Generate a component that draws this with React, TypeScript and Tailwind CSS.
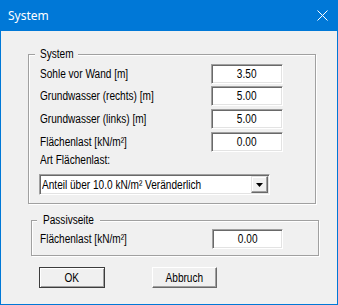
import React from "react";

const dlgFont = { fontFamily: '"Liberation Sans", Arial, sans-serif' };

function T({ children, origin = "origin-left" }: { children: React.ReactNode; origin?: string }) {
  return <span className={`inline-block whitespace-nowrap scale-x-[0.84] ${origin}`}>{children}</span>;
}

function Field({ value, w = "w-[72px]" }: { value: string; w?: string }) {
  return (
    <div
      className={`${w} h-[20px] bg-white border border-[#a0a0a0] border-b-white border-r-white shadow-[inset_1px_1px_0_#696969,inset_-1px_-1px_0_#e3e3e3] flex items-center justify-center text-[12px] leading-[14px] text-black`}
    >
      <T origin="origin-center">{value}</T>
    </div>
  );
}

function Row({ label, value, className = "" }: { label: string; value: string; className?: string }) {
  return (
    <div className={`flex items-center justify-between ${className}`}>
      <span className="text-[12px] leading-[14px] text-black"><T>{label}</T></span>
      <Field value={value} />
    </div>
  );
}

export default function App() {
  return (
    <div className="w-[338px] h-[305px] bg-[#f0f0f0] border-x border-b border-[#0078d7] flex flex-col select-none" style={dlgFont}>
      <div className="h-[31px] bg-[#0078d7] flex items-center justify-between pl-[8px] pr-[10px] -mx-px">
        <span className="text-white text-[12px]" style={{ fontFamily: '"Noto Sans", "Open Sans", sans-serif' }}>System</span>
        <svg width="11" height="11" viewBox="0 0 11 11" className="mt-[-1px]">
          <path d="M0.5 0.5 L10.5 10.5 M10.5 0.5 L0.5 10.5" stroke="white" strokeWidth="1" />
        </svg>
      </div>

      {/* System group */}
      <div className="relative ml-[27px] mt-[23px] w-[288px] h-[150px] border border-[#a0a0a0] shadow-[inset_1px_1px_0_white,1px_1px_0_white] pl-[11px] pr-[32px] pt-[9px]">
        <span className="absolute -top-[8px] left-[6px] w-[43px] bg-[#f0f0f0] pl-[5px] text-[12px] leading-[14px] text-black"><T>System</T></span>
        <Row label="Sohle vor Wand [m]" value="3.50" />
        <Row label="Grundwasser (rechts) [m]" value="5.00" className="mt-[2px]" />
        <Row label="Grundwasser (links) [m]" value="5.00" className="mt-[3px]" />
        <Row label="Flächenlast [kN/m²]" value="0.00" className="mt-[3px]" />
        <div className="mt-[1px] text-[12px] leading-[14px] text-black"><T>Art Flächenlast:</T></div>
        <div className="mt-[7px] -ml-px w-[231px] h-[21px] bg-white border border-[#a0a0a0] border-b-white border-r-white shadow-[inset_1px_1px_0_#696969,inset_-1px_-1px_0_#e3e3e3] flex items-center pl-[2px] pr-[1px]">
          <span className="flex-1 text-[12px] leading-[14px] text-black whitespace-nowrap"><T>Anteil über 10.0 kN/m² Veränderlich</T></span>
          <div className="w-[17px] h-[17px] bg-[#f0f0f0] border border-[#e3e3e3] border-b-[#696969] border-r-[#696969] shadow-[inset_-1px_-1px_0_#a0a0a0,inset_1px_1px_0_white] flex items-center justify-center">
            <svg width="7" height="4" viewBox="0 0 7 4">
              <path d="M0 0 H7 L3.5 4 Z" fill="black" />
            </svg>
          </div>
        </div>
      </div>

      {/* Passivseite group */}
      <div className="relative ml-[30px] mt-[16px] w-[288px] h-[36px] border border-[#a0a0a0] shadow-[inset_1px_1px_0_white,1px_1px_0_white] pl-[8px] pr-[35px] pt-[8px]">
        <span className="absolute -top-[8px] left-[5px] w-[63px] bg-[#f0f0f0] pl-[6px] text-[12px] leading-[14px] text-black"><T>Passivseite</T></span>
        <div className="flex items-center justify-between">
          <span className="text-[12px] leading-[14px] text-black"><T>Flächenlast [kN/m²]</T></span>
          <Field value="0.00" w="w-[71px]" />
        </div>
      </div>

      {/* Buttons */}
      <div className="flex mt-[11px] ml-[38px]">
        <button className="w-[66px] h-[21px] border border-[#3c3c3c] bg-[#f0f0f0] shadow-[inset_1px_1px_0_white,inset_-1px_-1px_0_#a0a0a0] text-[12px] leading-[14px] text-black flex items-center justify-center">
          <T origin="origin-center">OK</T>
        </button>
        <button className="ml-[47px] w-[65px] h-[21px] border border-white border-b-[#696969] border-r-[#696969] bg-[#f0f0f0] shadow-[inset_-1px_-1px_0_#a0a0a0] text-[12px] leading-[14px] text-black flex items-center justify-center">
          <T origin="origin-center">Abbruch</T>
        </button>
      </div>
    </div>
  );
}
